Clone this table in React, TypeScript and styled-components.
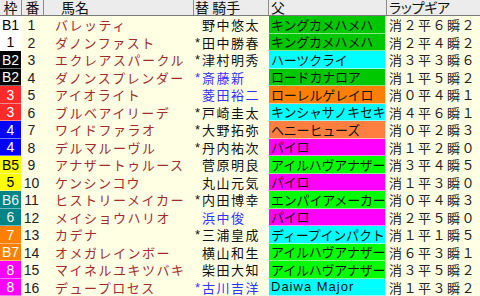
import styled, { createGlobalStyle } from "styled-components";

type Horse = {
	frame: string;
	frameNo: number;
	no: number;
	name: string;
	jockey: string;
	change?: boolean;
	blue?: boolean;
	sire: string;
	sireColor: string;
	gear: string;
};

const FRAME_BG: Record<number, string> = {
	1: "#ffffff",
	2: "#000000",
	3: "#ff2a2a",
	4: "#0000ff",
	5: "#ffff00",
	6: "#008484",
	7: "#ff8000",
	8: "#ff00ff",
};

const FRAME_FG: Record<number, string> = {
	1: "#000000",
	2: "#ffffff",
	3: "#ffffff",
	4: "#ffffff",
	5: "#000000",
	6: "#e8f4f4",
	7: "#ffffff",
	8: "#ffffff",
};

const GREEN_DARK = "#00c800";
const GREEN = "#00ff00";
const CYAN = "#00ffff";
const ORANGE = "#ff8000";
const CORAL = "#ff7f40";
const MAGENTA = "#ff00ff";

const horses: Horse[] = [
	{ frame: "B1", frameNo: 1, no: 1, name: "バレッティ", jockey: "野中悠太", sire: "キングカメハメハ", sireColor: GREEN_DARK, gear: "消２平６瞬２" },
	{ frame: "1", frameNo: 1, no: 2, name: "ダノンファスト", jockey: "田中勝春", change: true, sire: "キングカメハメハ", sireColor: GREEN_DARK, gear: "消２平４瞬２" },
	{ frame: "B2", frameNo: 2, no: 3, name: "エクレアスパークル", jockey: "津村明秀", change: true, sire: "ハーツクライ", sireColor: CYAN, gear: "消３平３瞬６" },
	{ frame: "B2", frameNo: 2, no: 4, name: "ダノンスプレンダー", jockey: "斎藤新", change: true, blue: true, sire: "ロードカナロア", sireColor: GREEN_DARK, gear: "消１平５瞬２" },
	{ frame: "3", frameNo: 3, no: 5, name: "アイオライト", jockey: "菱田裕二", blue: true, sire: "ローレルゲレイロ", sireColor: ORANGE, gear: "消０平４瞬１" },
	{ frame: "3", frameNo: 3, no: 6, name: "ブルベアイリーデ", jockey: "戸崎圭太", change: true, sire: "キンシャサノキセキ", sireColor: CYAN, gear: "消４平６瞬１" },
	{ frame: "4", frameNo: 4, no: 7, name: "ワイドファラオ", jockey: "大野拓弥", change: true, sire: "ヘニーヒューズ", sireColor: CORAL, gear: "消０平２瞬３" },
	{ frame: "4", frameNo: 4, no: 8, name: "デルマルーヴル", jockey: "丹内祐次", change: true, sire: "パイロ", sireColor: MAGENTA, gear: "消１平２瞬０" },
	{ frame: "B5", frameNo: 5, no: 9, name: "アナザートゥルース", jockey: "菅原明良", sire: "アイルハヴアナザー", sireColor: GREEN, gear: "消３平４瞬５" },
	{ frame: "5", frameNo: 5, no: 10, name: "ケンシンコウ", jockey: "丸山元気", sire: "パイロ", sireColor: MAGENTA, gear: "消１平３瞬０" },
	{ frame: "B6", frameNo: 6, no: 11, name: "ヒストリーメイカー", jockey: "内田博幸", change: true, sire: "エンパイアメーカー", sireColor: GREEN, gear: "消０平４瞬３" },
	{ frame: "6", frameNo: 6, no: 12, name: "メイショウハリオ", jockey: "浜中俊", blue: true, sire: "パイロ", sireColor: MAGENTA, gear: "消２平５瞬０" },
	{ frame: "7", frameNo: 7, no: 13, name: "カデナ", jockey: "三浦皇成", change: true, sire: "ディープインパクト", sireColor: CYAN, gear: "消１平１瞬５" },
	{ frame: "B7", frameNo: 7, no: 14, name: "オメガレインボー", jockey: "横山和生", sire: "アイルハヴアナザー", sireColor: GREEN, gear: "消６平３瞬１" },
	{ frame: "8", frameNo: 8, no: 15, name: "マイネルユキツバキ", jockey: "柴田大知", sire: "アイルハヴアナザー", sireColor: GREEN, gear: "消３平５瞬２" },
	{ frame: "8", frameNo: 8, no: 16, name: "デュープロセス", jockey: "古川吉洋", change: true, blue: true, sire: "Daiwa Major", sireColor: CYAN, gear: "消１平３瞬２" },
];

export default function App() {
	return (
		<>
			<GlobalStyle />
			<Table>
				<HeaderRow>
					<HeadCell>枠</HeadCell>
					<HeadCell>番</HeadCell>
					<HeadCell $pad={17}>馬名</HeadCell>
					<HeadCell $pad={1}>替&nbsp;騎手</HeadCell>
					<HeadCell $pad={2}>父</HeadCell>
					<HeadCell $pad={2} $narrow>ラップギア</HeadCell>
				</HeaderRow>
				<Body>
					{horses.map((h) => (
						<Row key={h.no}>
							<FrameCell $bg={FRAME_BG[h.frameNo]} $fg={FRAME_FG[h.frameNo]}>
								{h.frame}
							</FrameCell>
							<NumCell>{h.no}</NumCell>
							<NameCell>{h.name}</NameCell>
							<JockeyCell $blue={h.blue}>
								<Mark>{h.change ? "*" : ""}</Mark>
								<span>{h.jockey}</span>
							</JockeyCell>
							<SireCell $bg={h.sireColor} $latin={h.sire === "Daiwa Major"}>
								{h.sire}
							</SireCell>
							<GearCell>{h.gear}</GearCell>
						</Row>
					))}
				</Body>
			</Table>
		</>
	);
}

const GlobalStyle = createGlobalStyle`
	html, body {
		margin: 0;
		padding: 0;
		background: #ffffe4;
	}
	body {
		font-family: "Noto Sans CJK JP", "Liberation Sans", sans-serif;
	}
`;

const COLUMNS = "21px 22px 150px 75px 118px 94px";

const Table = styled.div`
	width: 480px;
	height: 296px;
	display: flex;
	flex-direction: column;
	background: #ffffe4;
	overflow: hidden;
`;

const HeaderRow = styled.div`
	flex: none;
	height: 16px;
	display: grid;
	grid-template-columns: ${COLUMNS};
	background: #ececec;
	border-bottom: 1px solid #7a7a7a;
	box-sizing: border-box;
`;

const HeadCell = styled.div<{ $pad?: number; $narrow?: boolean }>`
	display: flex;
	align-items: center;
	justify-content: ${(p) => (p.$pad === undefined ? "center" : "flex-start")};
	padding-left: ${(p) => p.$pad ?? 0}px;
	height: 15px;
	font-size: 14px;
	line-height: 15px;
	color: #111;
	white-space: nowrap;
	font-feature-settings: ${(p) => (p.$narrow ? '"palt"' : "normal")};
	letter-spacing: ${(p) => (p.$narrow ? "-0.3px" : "0")};
	& + & {
		border-left: 1px solid #8c8c8c;
	}
`;

const Body = styled.div`
	flex: none;
	height: 280px;
	display: grid;
	grid-template-rows: repeat(16, 17.5px);
`;

const Row = styled.div`
	display: grid;
	grid-template-columns: ${COLUMNS};
	height: 17.5px;
	overflow: hidden;
`;

const Cell = styled.div`
	display: flex;
	align-items: center;
	height: 100%;
	white-space: nowrap;
	overflow: hidden;
	box-sizing: border-box;
	padding-top: 1px;
	line-height: 14px;
`;

const FrameCell = styled(Cell)<{ $bg: string; $fg: string }>`
	justify-content: center;
	background: ${(p) => p.$bg};
	color: ${(p) => p.$fg};
	border-bottom: 1px solid rgba(255, 255, 255, 0.45);
	font-family: "Liberation Sans", sans-serif;
	font-size: 14px;
`;

const NumCell = styled(Cell)`
	justify-content: center;
	color: #222;
	font-family: "Liberation Sans", sans-serif;
	font-size: 14px;
	padding-right: 1px;
`;

const NameCell = styled(Cell)`
	padding-left: 12px;
	color: #a02c2c;
	font-size: 13px;
	letter-spacing: 1.5px;
`;

const JockeyCell = styled(Cell)<{ $blue?: boolean }>`
	padding-left: 2px;
	color: ${(p) => (p.$blue ? "#3333ff" : "#111")};
	font-size: 13px;
	letter-spacing: 1.5px;
`;

const Mark = styled.span`
	flex: none;
	width: 7px;
	font-family: "Liberation Sans", sans-serif;
	font-size: 13px;
	letter-spacing: 0;
`;

const SireCell = styled(Cell)<{ $bg: string; $latin?: boolean }>`
	padding-left: 2px;
	background: ${(p) => p.$bg};
	color: #111;
	border-bottom: 1px solid rgba(255, 255, 255, 0.55);
	border-left: 1px solid #ffffff;
	border-right: 1px solid rgba(255, 255, 255, 0.7);
	font-size: 13px;
	letter-spacing: ${(p) => (p.$latin ? "1px" : "-0.2px")};
	font-family: ${(p) =>
		p.$latin ? '"Liberation Sans", sans-serif' : '"Noto Sans CJK JP", sans-serif'};
`;

const GearCell = styled(Cell)`
	padding-left: 3px;
	color: #222;
	font-size: 13px;
	letter-spacing: 1.5px;
`;
